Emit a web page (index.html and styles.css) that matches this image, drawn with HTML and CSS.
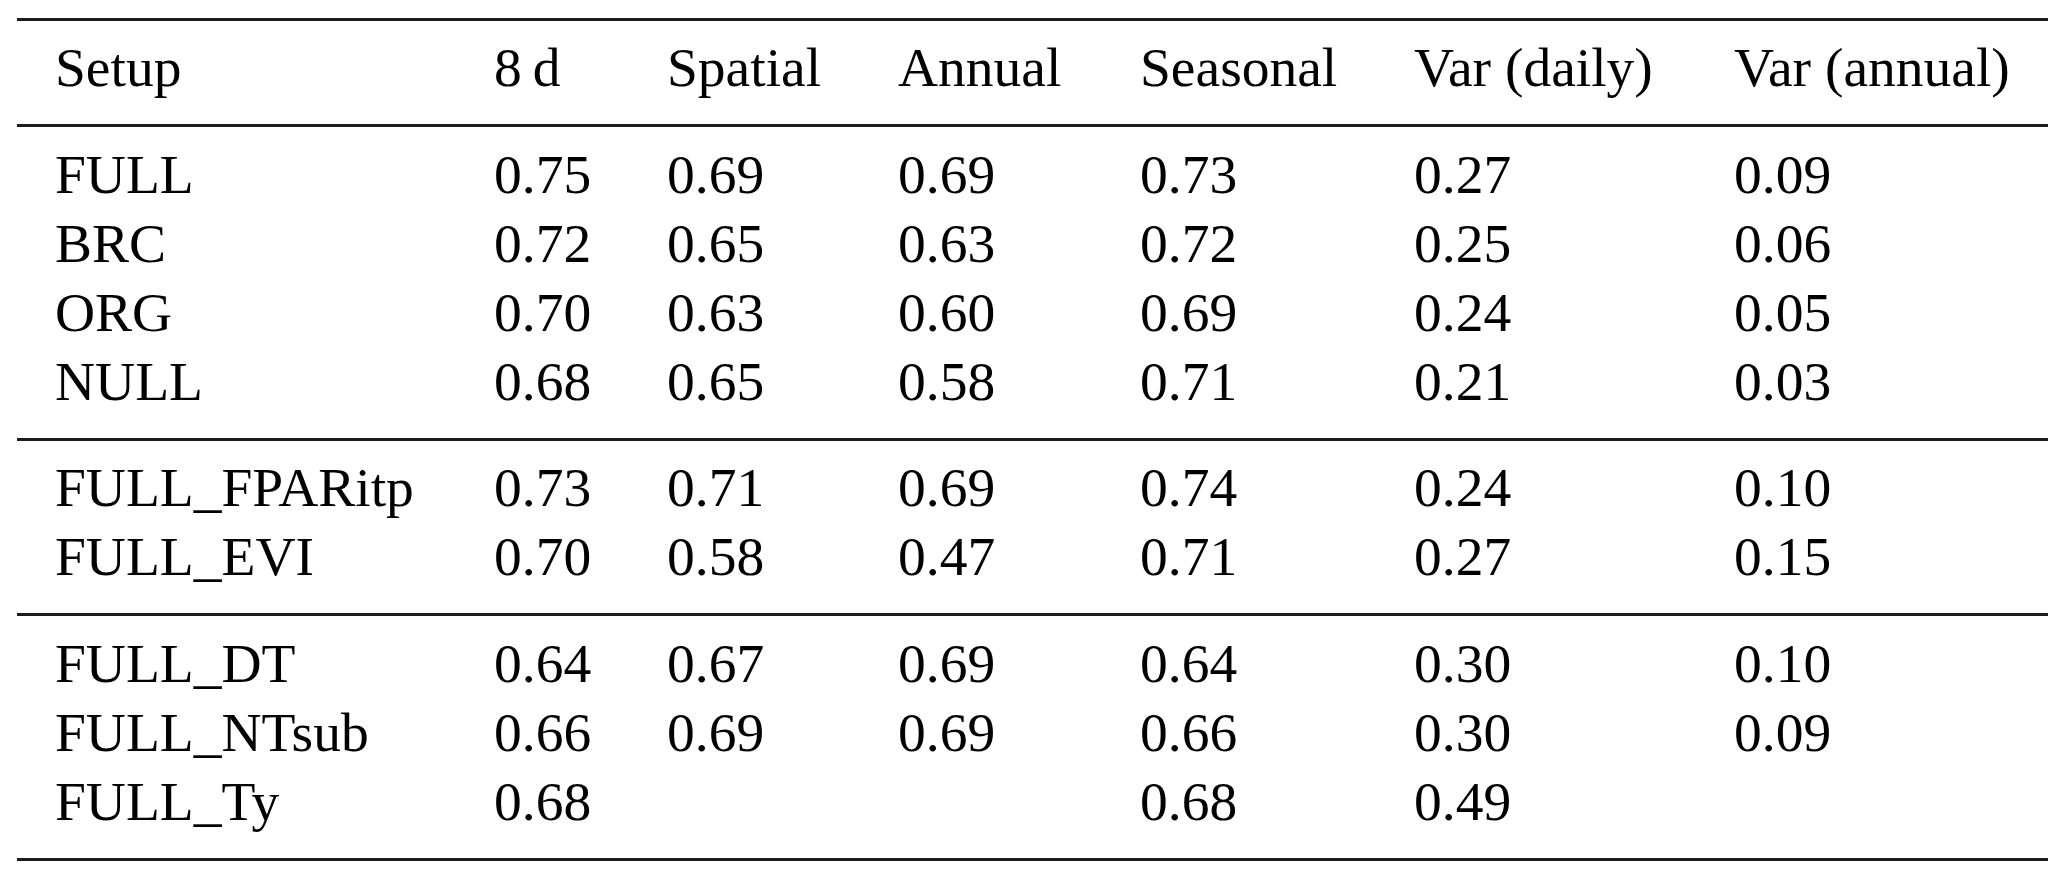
FILE: index.html
```html
<!DOCTYPE html>
<html lang="en">
<head>
<meta charset="utf-8">
<title>Setup comparison table</title>
<link rel="stylesheet" href="styles.css">
</head>
<body>
<table class="results">
  <colgroup>
    <col class="col-setup">
    <col class="col-8d">
    <col class="col-spatial">
    <col class="col-annual">
    <col class="col-seasonal">
    <col class="col-vdaily">
    <col class="col-vannual">
  </colgroup>
  <thead>
    <tr>
      <th class="first">Setup</th>
      <th>8&#8201;d</th>
      <th>Spatial</th>
      <th>Annual</th>
      <th>Seasonal</th>
      <th>Var (daily)</th>
      <th>Var (annual)</th>
    </tr>
  </thead>
  <tbody>
    <tr><td class="first">FULL</td><td>0.75</td><td>0.69</td><td>0.69</td><td>0.73</td><td>0.27</td><td>0.09</td></tr>
    <tr><td class="first">BRC</td><td>0.72</td><td>0.65</td><td>0.63</td><td>0.72</td><td>0.25</td><td>0.06</td></tr>
    <tr><td class="first">ORG</td><td>0.70</td><td>0.63</td><td>0.60</td><td>0.69</td><td>0.24</td><td>0.05</td></tr>
    <tr><td class="first">NULL</td><td>0.68</td><td>0.65</td><td>0.58</td><td>0.71</td><td>0.21</td><td>0.03</td></tr>
  </tbody>
  <tbody>
    <tr><td class="first">FULL_FPARitp</td><td>0.73</td><td>0.71</td><td>0.69</td><td>0.74</td><td>0.24</td><td>0.10</td></tr>
    <tr><td class="first">FULL_EVI</td><td>0.70</td><td>0.58</td><td>0.47</td><td>0.71</td><td>0.27</td><td>0.15</td></tr>
  </tbody>
  <tbody>
    <tr><td class="first">FULL_DT</td><td>0.64</td><td>0.67</td><td>0.69</td><td>0.64</td><td>0.30</td><td>0.10</td></tr>
    <tr><td class="first">FULL_NTsub</td><td>0.66</td><td>0.69</td><td>0.69</td><td>0.66</td><td>0.30</td><td>0.09</td></tr>
    <tr><td class="first">FULL_Ty</td><td>0.68</td><td></td><td></td><td>0.68</td><td>0.49</td><td></td></tr>
  </tbody>
</table>
</body>
</html>
```

FILE: styles.css
```css
html, body {
  margin: 0;
  padding: 0;
  background: #ffffff;
}

body {
  font-family: "Liberation Serif", "Times New Roman", serif;
  color: #000000;
}

.results {
  margin: 17.5px 0 0 17px;
  width: 2031px;
  table-layout: fixed;
  border-collapse: separate;
  border-spacing: 0;
  font-size: 55.5px;
  line-height: 69px;
}

.col-setup   { width: 477px; }
.col-8d      { width: 173px; }
.col-spatial { width: 231px; }
.col-annual  { width: 242px; }
.col-seasonal{ width: 274px; }
.col-vdaily  { width: 320px; }
.col-vannual { width: 314px; }

.results th,
.results td {
  padding: 0;
  text-align: left;
  font-weight: normal;
  white-space: nowrap;
  vertical-align: baseline;
}

.results .first {
  padding-left: 38px;
}

.results thead th {
  border-top: 3px solid #1c1c1c;
  border-bottom: 3px solid #1c1c1c;
  padding-top: 12.5px;
  padding-bottom: 22px;
}

.results tbody tr:first-child td {
  padding-top: 12.5px;
}

.results tbody tr:last-child td {
  padding-bottom: 22px;
  border-bottom: 3px solid #1c1c1c;
}
```
